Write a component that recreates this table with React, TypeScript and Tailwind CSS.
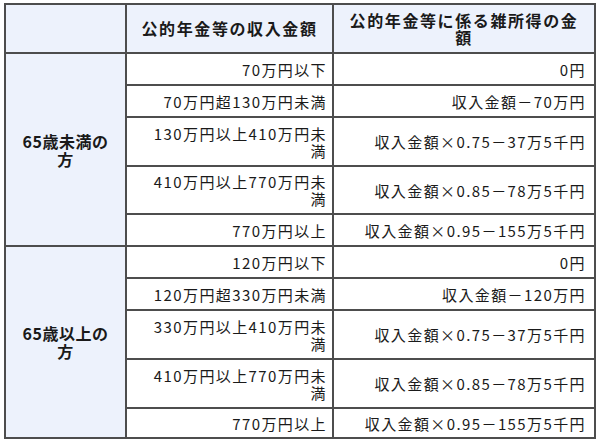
const groups = [
  {
    label: ["65歳未満の", "方"],
    rows: [
      { income: ["70万円以下"], amount: "0円", h: "h-[32px]" },
      { income: ["70万円超130万円未満"], amount: "収入金額－70万円", h: "h-[32px]" },
      { income: ["130万円以上410万円未", "満"], amount: "収入金額×0.75－37万5千円", h: "h-[49px]" },
      { income: ["410万円以上770万円未", "満"], amount: "収入金額×0.85－78万5千円", h: "h-[48px]" },
      { income: ["770万円以上"], amount: "収入金額×0.95－155万5千円", h: "h-[32px]" },
    ],
  },
  {
    label: ["65歳以上の", "方"],
    rows: [
      { income: ["120万円以下"], amount: "0円", h: "h-[32px]" },
      { income: ["120万円超330万円未満"], amount: "収入金額－120万円", h: "h-[32px]" },
      { income: ["330万円以上410万円未", "満"], amount: "収入金額×0.75－37万5千円", h: "h-[49px]" },
      { income: ["410万円以上770万円未", "満"], amount: "収入金額×0.85－78万5千円", h: "h-[49px]" },
      { income: ["770万円以上"], amount: "収入金額×0.95－155万5千円", h: "h-[30px]" },
    ],
  },
]

function Lines({ lines }: { lines: string[] }) {
  return (
    <>
      {lines.map((l, i) => (
        <span key={i} className="block">{l}</span>
      ))}
    </>
  )
}

export default function App() {
  return (
    <div
      className="w-[600px] h-[442px] bg-white pt-[3px] pl-[4px] text-[#1a1a1a]"
      style={{ fontFamily: '"Noto Sans CJK JP", "Noto Sans", sans-serif' }}
    >
      <table className="table-fixed border-collapse w-[592px]">
        <colgroup>
          <col className="w-[121px]" />
          <col className="w-[207px]" />
          <col />
        </colgroup>
        <thead>
          <tr className="h-[49px] bg-[#edf2fc] text-[16px] font-bold leading-[17px] tracking-[1.6px]">
            <th className="border-2 border-[#4d4d4d]"></th>
            <th className="border-2 border-[#4d4d4d] text-center">公的年金等の収入金額</th>
            <th className="border-2 border-[#4d4d4d] text-center">
              <Lines lines={["公的年金等に係る雑所得の金", "額"]} />
            </th>
          </tr>
        </thead>
        <tbody className="text-[15px] leading-[17px] tracking-[1.4px]">
          {groups.map((g, gi) =>
            g.rows.map((r, ri) => (
              <tr key={`${gi}-${ri}`} className={r.h}>
                {ri === 0 && (
                  <td
                    rowSpan={g.rows.length}
                    className="border-2 border-[#4d4d4d] bg-[#edf2fc] text-center font-bold text-[16px] leading-[18px] tracking-[0.5px]"
                  >
                    <Lines lines={g.label} />
                  </td>
                )}
                <td className="border-2 border-[#4d4d4d] text-right pr-[5px] pl-1 whitespace-nowrap">
                  <Lines lines={r.income} />
                </td>
                <td className="border-2 border-[#4d4d4d] text-right pr-[8px] whitespace-nowrap">{r.amount}</td>
              </tr>
            ))
          )}
        </tbody>
      </table>
    </div>
  )
}
